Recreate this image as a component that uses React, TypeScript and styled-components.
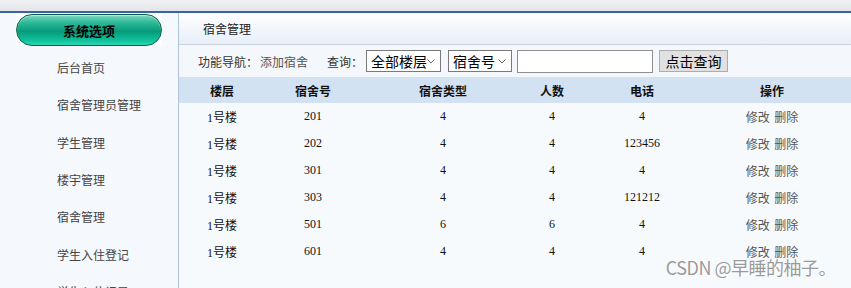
import React from 'react'
import styled, { createGlobalStyle } from 'styled-components'

const GlobalStyle = createGlobalStyle`
  html, body {
    margin: 0;
    padding: 0;
    background: #f6f9fd;
    font-family: 'Noto Sans CJK SC', 'Liberation Sans', sans-serif;
    font-size: 12px;
    color: #333;
  }
`

const MENU = ['后台首页', '宿舍管理员管理', '学生管理', '楼宇管理', '宿舍管理', '学生入住登记', '学生入住记录']

const ROOMS = [
  { floor: '1号楼', no: '201', type: '4', count: '4', phone: '4' },
  { floor: '1号楼', no: '202', type: '4', count: '4', phone: '123456' },
  { floor: '1号楼', no: '301', type: '4', count: '4', phone: '4' },
  { floor: '1号楼', no: '303', type: '4', count: '4', phone: '121212' },
  { floor: '1号楼', no: '501', type: '6', count: '6', phone: '4' },
  { floor: '1号楼', no: '601', type: '4', count: '4', phone: '4' },
]

const COLS = '86px 96px 164px 54px 126px 134px 1fr'

const Page = styled.div`
  position: relative;
  width: 851px;
  height: 288px;
  overflow: hidden;
  display: flex;
  flex-direction: column;
`

const TopStrip = styled.div`
  height: 11px;
  flex: none;
  background: linear-gradient(#f1f2f4, #e2e5e9);
  border-bottom: 2px solid #3d62a3;
`

const Body = styled.div`
  flex: 1;
  display: flex;
  min-height: 0;
`

const Sidebar = styled.div`
  width: 178px;
  flex: none;
  background: #f5f8fd;
  border-right: 1px solid #afc3de;
  display: flex;
  flex-direction: column;
`

const ButtonHolder = styled.div`
  margin: 1px 0 0 16px;
  width: 146px;
  height: 34px;
  background: #fff;
  display: flex;
  align-items: center;
`

const PillButton = styled.div`
  width: 144px;
  height: 30px;
  border-radius: 16px;
  border: 1px solid #0b5f4b;
  background: linear-gradient(#7fd7c0 0%, #2dba98 25%, #069a7b 55%, #10c29c 85%, #2fd7b3 100%);
  box-shadow: inset 0 1px 1px rgba(255, 255, 255, 0.5);
  display: flex;
  align-items: center;
  justify-content: center;
  font-weight: 700;
  font-size: 13px;
  color: #000;
`

const MenuList = styled.div`
  display: flex;
  flex-direction: column;
  padding-top: 3px;
`

const MenuItem = styled.div`
  flex: none;
  height: 37.35px;
  line-height: 37px;
  padding-left: 57px;
  color: #444;
  white-space: nowrap;
`

const Main = styled.div`
  flex: 1;
  display: flex;
  flex-direction: column;
  background: #f7fafd;
`

const TitleBar = styled.div`
  height: 31px;
  flex: none;
  display: flex;
  align-items: center;
  padding-left: 24px;
  background: linear-gradient(#ffffff, #e6eef8);
  border-bottom: 1px solid #c9d4e0;
  color: #222;
`

const Toolbar = styled.div`
  height: 32px;
  flex: none;
  display: flex;
  align-items: center;
  padding-left: 19px;
  background: #f4f8fc;
  color: #333;
`

const Label = styled.span<{ gap?: number }>`
  margin-right: ${({ gap }) => gap ?? 0}px;
  color: ${({ color }) => color || '#333'};
  white-space: nowrap;
`

const SelectBox = styled.div<{ w: number; gap: number }>`
  position: relative;
  width: ${({ w }) => w}px;
  height: 22px;
  box-sizing: border-box;
  border: 1px solid #7a7a7a;
  background: #fff;
  display: flex;
  align-items: center;
  padding-left: 4px;
  font-size: 14px;
  color: #000;
  margin-right: ${({ gap }) => gap}px;
`

const Chevron = styled.svg`
  position: absolute;
  right: 5px;
  top: 8px;
`

const SearchInput = styled.div`
  width: 136px;
  height: 23px;
  box-sizing: border-box;
  border: 1px solid #8f8f8f;
  background: #fff;
  margin-right: 6px;
`

const QueryButton = styled.div`
  width: 69px;
  height: 22px;
  box-sizing: border-box;
  border: 1px solid #adadad;
  background: #e1e1e1;
  display: flex;
  align-items: center;
  justify-content: center;
  font-size: 14px;
  color: #000;
`

const HeadRow = styled.div`
  display: grid;
  grid-template-columns: ${COLS};
  height: 26px;
  align-items: center;
  background: #d3e2f3;
  font-weight: 700;
  color: #111;
  text-align: center;
`

const Row = styled.div`
  display: grid;
  grid-template-columns: ${COLS};
  height: 27px;
  align-items: center;
  text-align: center;
  font-family: 'Liberation Serif', 'Noto Sans CJK SC', serif;
  color: #111;
`

const Actions = styled.span`
  font-family: 'Noto Sans CJK SC', sans-serif;
  color: #555;
  word-spacing: 2px;
`

const Watermark = styled.div`
  position: absolute;
  right: 15px;
  bottom: 8px;
  font-size: 18px;
  color: #9a9a9a;
  text-shadow: 0 0 2px #fff, 1px 1px 0 #fff;
  letter-spacing: -0.5px;
`

const ChevronIcon = () => (
  <Chevron width="8" height="5" viewBox="0 0 8 5">
    <path d="M0.5 0.5 L4 4 L7.5 0.5" fill="none" stroke="#666" strokeWidth="1" />
  </Chevron>
)

const App: React.FC = () => {
  return (
    <Page>
      <GlobalStyle />
      <TopStrip />
      <Body>
        <Sidebar>
          <ButtonHolder>
            <PillButton>系统选项</PillButton>
          </ButtonHolder>
          <MenuList>
            {MENU.map((item) => (
              <MenuItem key={item}>{item}</MenuItem>
            ))}
          </MenuList>
        </Sidebar>
        <Main>
          <TitleBar>宿舍管理</TitleBar>
          <Toolbar>
            <Label gap={2}>功能导航：</Label>
            <Label gap={19} color="#555">添加宿舍</Label>
            <Label gap={3}>查询：</Label>
            <SelectBox w={75} gap={7}>
              全部楼层
              <ChevronIcon />
            </SelectBox>
            <SelectBox w={64} gap={5}>
              宿舍号
              <ChevronIcon />
            </SelectBox>
            <SearchInput />
            <QueryButton>点击查询</QueryButton>
          </Toolbar>
          <HeadRow>
            <span>楼层</span>
            <span>宿舍号</span>
            <span>宿舍类型</span>
            <span>人数</span>
            <span>电话</span>
            <span>操作</span>
          </HeadRow>
          {ROOMS.map((r) => (
            <Row key={r.no}>
              <span>{r.floor}</span>
              <span>{r.no}</span>
              <span>{r.type}</span>
              <span>{r.count}</span>
              <span>{r.phone}</span>
              <Actions>修改 删除</Actions>
            </Row>
          ))}
        </Main>
      </Body>
      <Watermark>CSDN @早睡的柚子。</Watermark>
    </Page>
  )
}

export default App
